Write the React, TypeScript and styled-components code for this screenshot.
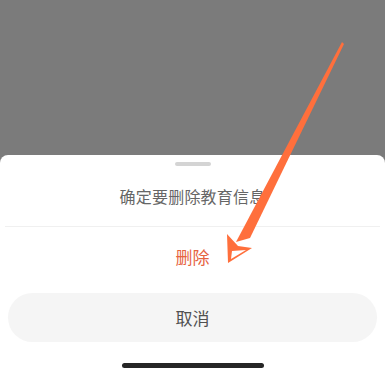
import React from 'react';
import styled, { createGlobalStyle } from 'styled-components';

const GlobalStyle = createGlobalStyle`
  html, body {
    margin: 0;
    padding: 0;
    width: 385px;
    height: 391px;
    overflow: hidden;
    background: #7b7b7b;
    font-family: "Noto Sans CJK SC", "Noto Sans", sans-serif;
  }
`;

const Screen = styled.div`
  position: relative;
  width: 385px;
  height: 391px;
  display: flex;
  flex-direction: column;
  background: #7b7b7b;
`;

const Backdrop = styled.div`
  height: 155px;
  flex-shrink: 0;
`;

const Sheet = styled.div`
  flex: 1;
  background: #fff;
  border-radius: 8px 8px 0 0;
  display: flex;
  flex-direction: column;
  align-items: center;
  padding-top: 7px;
`;

const Handle = styled.div`
  width: 36px;
  height: 4px;
  border-radius: 2px;
  background: #d4d4d4;
`;

const Title = styled.div`
  height: 60px;
  width: 100%;
  display: flex;
  align-items: center;
  justify-content: center;
  font-size: 16px;
  color: #666;
  letter-spacing: 0.2px;
`;

const Divider = styled.div`
  width: calc(100% - 10px);
  height: 1px;
  background: #f0f0f0;
`;

const Action = styled.div<{ $danger?: boolean }>`
  height: 58px;
  width: 100%;
  display: flex;
  align-items: center;
  justify-content: center;
  font-size: 17px;
  color: ${p => (p.$danger ? '#e6633f' : '#555')};
`;

const CancelButton = styled.div`
  margin-top: 8px;
  width: calc(100% - 16px);
  height: 49px;
  border-radius: 25px;
  background: #f5f5f5;
  display: flex;
  align-items: center;
  justify-content: center;
  font-size: 17px;
  color: #505050;
`;

const HomeBar = styled.div`
  margin-top: 21px;
  width: 142px;
  height: 5px;
  border-radius: 3px;
  background: #262626;
`;

const ArrowLayer = styled.svg`
  position: absolute;
  left: 0;
  top: 0;
  pointer-events: none;
`;

export default function App() {
  return (
    <>
      <GlobalStyle />
      <Screen>
        <Backdrop />
        <Sheet>
          <Handle />
          <Title>确定要删除教育信息</Title>
          <Divider />
          <Action $danger>删除</Action>
          <CancelButton>取消</CancelButton>
          <HomeBar />
        </Sheet>
        <ArrowLayer width="385" height="391" viewBox="0 0 385 391">
          <polygon points="342,42 344,44 250,238 236,242" fill="#ff6f3c" />
          <polygon points="227,234 238,246 252,248 228,263" fill="#ff6f3c" />
          <polygon points="232,251 246,250 231,259" fill="#fff" />
        </ArrowLayer>
      </Screen>
    </>
  );
}
